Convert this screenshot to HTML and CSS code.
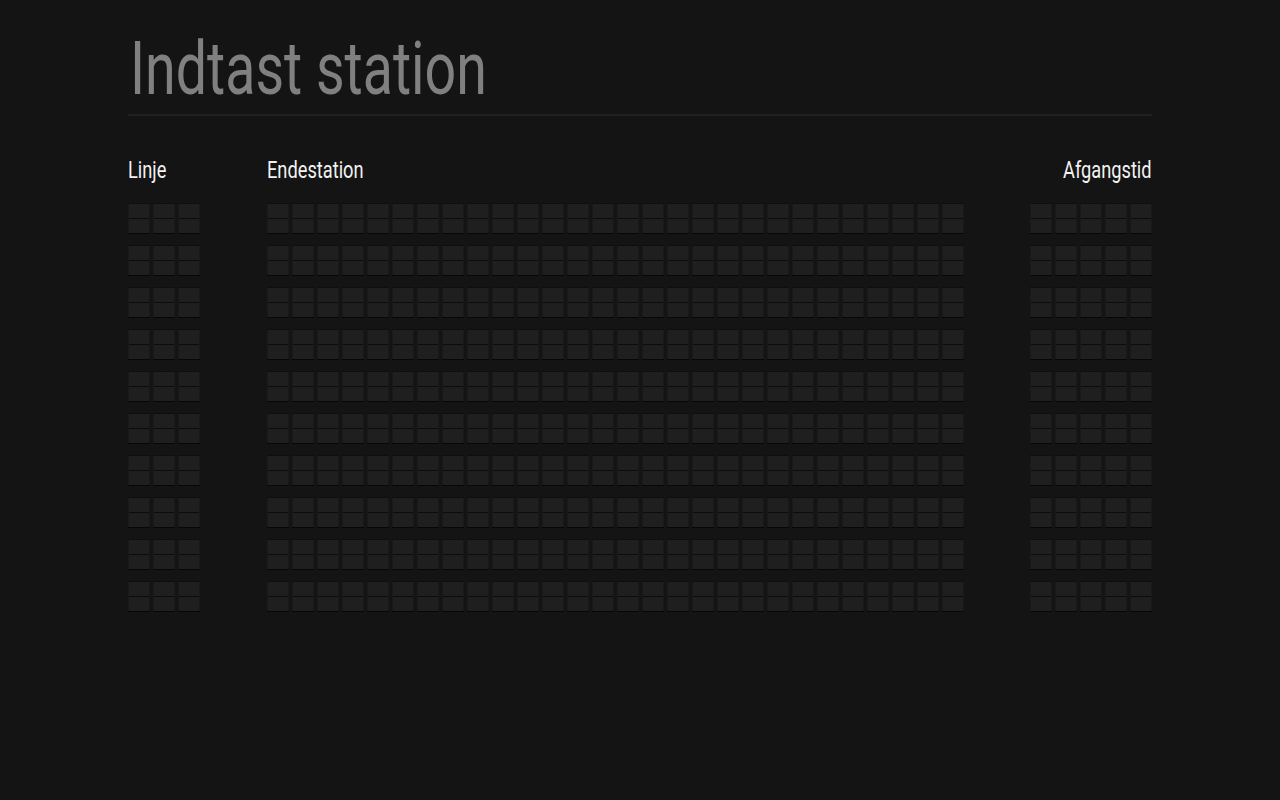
FILE: index.html
```html
<!DOCTYPE html>
<html lang="da">
<head>
    <meta charset="utf-8">
    <title>Indtast station</title>
    <link rel="stylesheet" href="styles.css">
</head>
<body>
    <div class="page">
        <h1 class="title"><span class="narrow">Indtast station</span></h1>
        <div class="board" id="board">
            <div class="head"><span class="narrow">Linje</span></div>
            <div class="head"><span class="narrow">Endestation</span></div>
            <div class="head head-right"><span class="narrow">Afgangstid</span></div>
        </div>
    </div>

    <script>
        // 10 rows: line (3), destination (28), departure time (5)
        var board = document.getElementById("board");
        var widths = [3, 28, 5];
        for (var r = 0; r < 10; r++) {
            for (var c = 0; c < widths.length; c++) {
                var group = document.createElement("div");
                group.className = "flaps";
                for (var i = 0; i < widths[c]; i++) {
                    var flap = document.createElement("span");
                    flap.className = "flap";
                    group.appendChild(flap);
                }
                board.appendChild(group);
            }
        }
    </script>
</body>
</html>
```

FILE: styles.css
```css
html, body
{
    margin: 0;
    padding: 0;
}
body
{
    background-color: #141414;
    color: #f2f2f2;
    font-family: Roboto, "Liberation Sans", sans-serif;
}
.page
{
    width: 1024px;
    margin: 0 auto;
    padding-top: 28px;
}
.narrow
{
    display: inline-block;
    transform: scaleX(0.76);
    transform-origin: left center;
    white-space: nowrap;
}
.title
{
    margin: 0;
    padding: 0 0 6px 2px;
    font-size: 75px;
    font-weight: normal;
    line-height: 80px;
    color: #808080;
    border-bottom: 2px solid #202020;
}
.title .narrow
{
    transform: scaleX(0.74);
}
.board
{
    display: grid;
    grid-template-columns: auto auto auto;
    justify-content: space-between;
    row-gap: 11px;
    margin-top: 41px;
}
.head
{
    font-size: 24px;
    line-height: 26px;
    margin-bottom: 9px;
}
.head-right
{
    justify-self: end;
}
.head-right .narrow
{
    transform-origin: right center;
}
.flaps
{
    display: flex;
    gap: 3px;
}
.flap
{
    display: block;
    width: 22px;
    height: 29px;
    background: linear-gradient(#1f1f1f 0, #1f1f1f 14px, #0c0c0c 14px, #0c0c0c 15px, #1f1f1f 15px);
    border-top: 1px solid #0e0e0e;
    border-bottom: 1px solid #070707;
    box-shadow: inset 1px 0 0 #191919, inset -1px 0 0 #191919;
}
```
